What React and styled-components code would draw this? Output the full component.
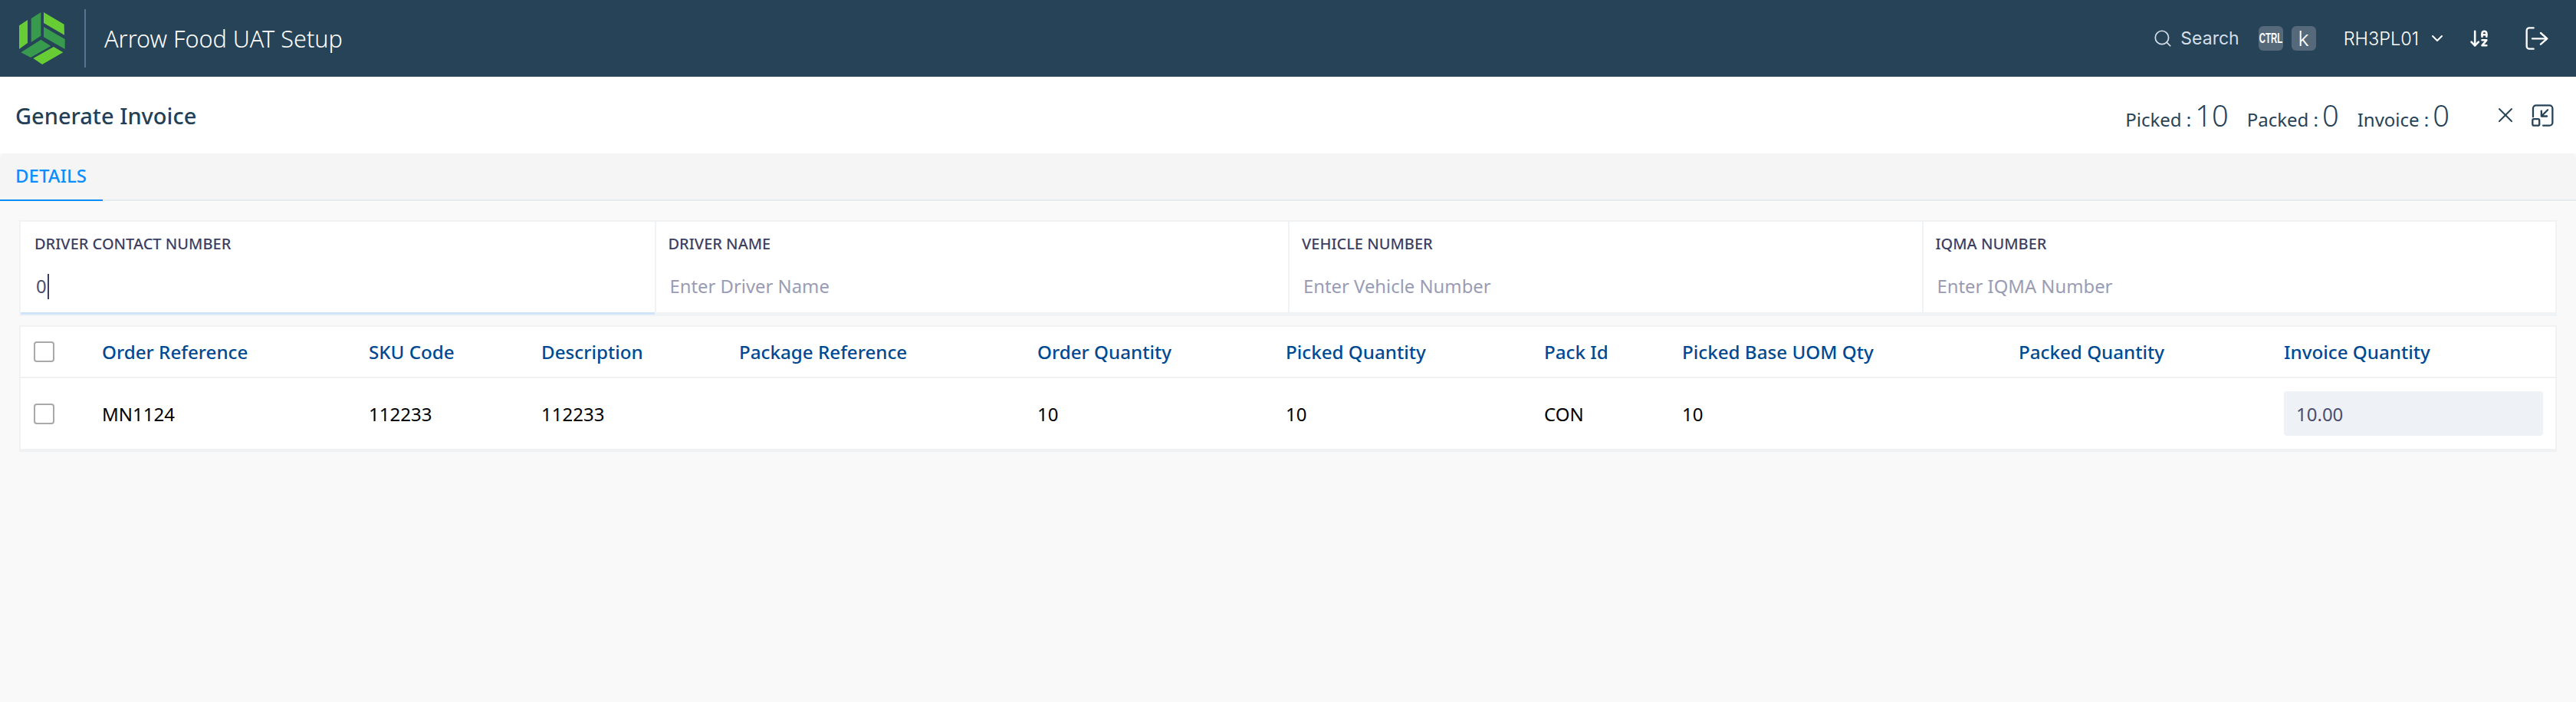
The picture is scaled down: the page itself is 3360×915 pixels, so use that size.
import React from 'react'
import styled, { createGlobalStyle } from 'styled-components'
import { ArrowDownAZ, ChevronDown, Search, X } from 'lucide-react'

const GlobalStyle = createGlobalStyle`
  html, body {
    margin: 0;
    padding: 0;
    height: 100%;
    background: #f9f9fa;
    font-family: "Noto Sans", "Open Sans", sans-serif;
  }
  * { box-sizing: border-box; }
`

const Page = styled.div`
  width: 3360px;
  height: 915px;
  overflow: hidden;
  background: #f9f9fa;
`

const TopBar = styled.header`
  display: flex;
  align-items: center;
  height: 100px;
  background: #264358;
  color: #fff;
`

const LogoMark = styled.svg`
  width: 60px;
  height: 68px;
  margin-left: 25px;
`

const BarDivider = styled.div`
  width: 2px;
  height: 76px;
  margin: 0 24px 0 25px;
  background: #557590;
`

const AppTitle = styled.div`
  flex: 1;
  font-size: 30.6px;
  font-weight: 300;
`

const SearchBox = styled.div`
  display: flex;
  align-items: center;
  gap: 10px;
  font-family: "Inter", sans-serif;
  font-size: 23px;
  color: #d5dfe7;
`

const KeyGroup = styled.div`
  display: flex;
  gap: 11px;
  margin-left: 25px;
`

const Key = styled.div`
  display: flex;
  align-items: center;
  justify-content: center;
  width: 32px;
  height: 32px;
  border-radius: 6px;
  background: #55697b;
  color: #fff;
`

const CtrlLabel = styled.span`
  font-family: "Liberation Sans", sans-serif;
  font-size: 12px;
  font-weight: 700;
  transform: scale(0.95, 1.55);
`

const KLabel = styled.span`
  font-family: "Inter", sans-serif;
  font-size: 27px;
  font-weight: 300;
  line-height: 1;
`

const UserMenu = styled.div`
  display: flex;
  align-items: center;
  gap: 12px;
  margin-left: 36px;
  font-family: "Inter", sans-serif;
  font-size: 23.5px;
  font-weight: 300;
  color: #fff;
`

const BarIcons = styled.div`
  display: flex;
  align-items: center;
  gap: 46px;
  margin: 0 36px 0 29px;
`

const TitleRow = styled.div`
  display: flex;
  align-items: center;
  justify-content: space-between;
  height: 100px;
  padding: 0 29px 0 20px;
  background: #fff;
  color: #264358;
`

const PageTitle = styled.h1`
  margin: 0;
  font-size: 29px;
  font-weight: 500;
  color: #253f55;
`

const TitleRight = styled.div`
  display: flex;
  align-items: center;
`

const Stat = styled.div`
  display: flex;
  align-items: baseline;
  gap: 5px;
  margin-right: 24px;
  font-size: 24px;
`

const StatValue = styled.span`
  font-size: 38px;
  font-weight: 300;
`

const CloseWrap = styled.div`
  display: flex;
  margin: 0 18px 0 33px;
`

const TabBar = styled.div`
  height: 62px;
  border-radius: 6px 6px 0 0;
  border-bottom: 2px solid #e4ecf0;
  background: #f5f5f5;
`

const Tab = styled.div`
  display: flex;
  align-items: center;
  width: 134px;
  height: 62px;
  padding: 0 0 3px 20px;
  border-bottom: 2px solid #0a8dff;
  color: #0a8dff;
  font-size: 24px;
  font-weight: 500;
`

const Content = styled.main`
  display: flex;
  flex-direction: column;
  gap: 12px;
  padding: 25px 25px 0;
`

const FormPanel = styled.section`
  display: grid;
  grid-template-columns: repeat(4, 1fr);
  height: 125px;
  border: 2px solid #f0f3f6;
  background: #fff;
`

const Field = styled.div`
  display: flex;
  flex-direction: column;
  padding: 16px 20px 0 ${(p) => (p.$first ? 18 : 16)}px;
  border-left: ${(p) => (p.$first ? 'none' : '2px solid #f0f3f6')};
  border-bottom: 3px solid ${(p) => (p.$active ? '#cfe4fb' : '#f0f3f6')};
`

const FieldLabel = styled.label`
  font-size: 20px;
  font-weight: 500;
  line-height: 26px;
  color: #3c3f63;
`

const FieldInput = styled.div`
  display: flex;
  align-items: center;
  height: 36px;
  margin-top: 24px;
  padding-left: 2px;
  font-size: 23.85px;
  color: ${(p) => (p.$placeholder ? '#9a9cb5' : '#4a4d70')};
`

const Caret = styled.span`
  width: 2px;
  height: 33px;
  margin-left: 1px;
  background: #3c3f63;
`

const TablePanel = styled.section`
  border: 2px solid #f0f1f3;
  border-bottom-width: 4px;
  background: #fff;
`

const Row = styled.div`
  display: grid;
  grid-template-columns: 106px 348px 225px 258px 389px 324px 337px 180px 439px 346px 1fr;
  align-items: center;
  height: ${(p) => p.$height}px;
  border-bottom: ${(p) => (p.$head ? '2px solid #f0f1f3' : 'none')};
  font-size: ${(p) => (p.$head ? 24.2 : 24)}px;
  color: ${(p) => (p.$head ? '#004a93' : '#000')};
  font-weight: ${(p) => (p.$head ? 500 : 400)};
`

const CheckCell = styled.div`
  display: flex;
  padding-left: 17px;
`

const Checkbox = styled.span`
  display: block;
  width: 27px;
  height: 27px;
  border: 2px solid #a9a9a9;
  border-radius: 4px;
  background: #fff;
`

const QuantityInput = styled.div`
  display: flex;
  align-items: center;
  height: 58px;
  margin-right: 16px;
  padding-left: 16px;
  border-radius: 4px;
  background: #eef1f5;
  color: #4a4d70;
`

const LogoutIcon = () => (
  <svg width="30" height="30" viewBox="280 44 90 90" fill="none" stroke="#fff" strokeWidth="7" strokeLinecap="round" strokeLinejoin="round">
    <path d="M312 48h-17a10 10 0 0 0-10 10v62a10 10 0 0 0 10 10h17" />
    <path d="M307 90h58M340 68l25 22-25 22" />
  </svg>
)

const CollapseIcon = () => (
  <svg width="29" height="29" viewBox="304 346 88 88" fill="none" stroke="#264358" strokeWidth="7" strokeLinecap="round" strokeLinejoin="round">
    <path d="M310 395v-33a12 12 0 0 1 12-12h53a12 12 0 0 1 12 12v56a12 12 0 0 1-12 12h-25" />
    <rect x="308" y="404" width="27" height="26" rx="5" />
    <path d="M368 368l-25 25M343 372v21h22" />
  </svg>
)

const fields = [
  { label: 'DRIVER CONTACT NUMBER', value: '0' },
  { label: 'DRIVER NAME', placeholder: 'Enter Driver Name' },
  { label: 'VEHICLE NUMBER', placeholder: 'Enter Vehicle Number' },
  { label: 'IQMA NUMBER', placeholder: 'Enter IQMA Number' },
]

const columns = [
  'Order Reference',
  'SKU Code',
  'Description',
  'Package Reference',
  'Order Quantity',
  'Picked Quantity',
  'Pack Id',
  'Picked Base UOM Qty',
  'Packed Quantity',
  'Invoice Quantity',
]

const rowValues = ['MN1124', '112233', '112233', '', '10', '10', 'CON', '10', '']

const stats = [
  { label: 'Picked :', value: 10 },
  { label: 'Packed :', value: 0 },
  { label: 'Invoice :', value: 0 },
]

export default function App() {
  return (
    <Page>
      <GlobalStyle />
      <TopBar>
        <LogoMark viewBox="75 48 180 204">
          <polygon fill="#68cc35" points="75,100 108,78 108,168 75,192" />
          <polygon fill="#379a4c" points="122,72 160,48 160,140 122,165" />
          <polygon fill="#68cc35" points="171,48 251,95 252,137 171,90" />
          <polygon fill="#379a4c" points="171,105 254,153 254,192 171,145" />
          <polygon fill="#379a4c" points="160,155 199,180 120,225 82,205" />
          <polygon fill="#68cc35" points="210,183 247,205 165,252 130,228" />
        </LogoMark>
        <BarDivider />
        <AppTitle>Arrow Food UAT Setup</AppTitle>
        <SearchBox>
          <Search size={26} strokeWidth={1.6} />
          Search
        </SearchBox>
        <KeyGroup>
          <Key>
            <CtrlLabel>CTRL</CtrlLabel>
          </Key>
          <Key>
            <KLabel>k</KLabel>
          </Key>
        </KeyGroup>
        <UserMenu>
          RH3PL01
          <ChevronDown size={24} strokeWidth={2} />
        </UserMenu>
        <BarIcons>
          <ArrowDownAZ size={28} strokeWidth={2.2} />
          <LogoutIcon />
        </BarIcons>
      </TopBar>
      <TitleRow>
        <PageTitle>Generate Invoice</PageTitle>
        <TitleRight>
          {stats.map((s) => (
            <Stat key={s.label}>
              {s.label}
              <StatValue>{s.value}</StatValue>
            </Stat>
          ))}
          <CloseWrap>
            <X size={32} strokeWidth={1.5} />
          </CloseWrap>
          <CollapseIcon />
        </TitleRight>
      </TitleRow>
      <TabBar>
        <Tab>DETAILS</Tab>
      </TabBar>
      <Content>
        <FormPanel>
          {fields.map((f, i) => (
            <Field key={f.label} $first={i === 0} $active={i === 0}>
              <FieldLabel>{f.label}</FieldLabel>
              <FieldInput $placeholder={!f.value}>
                {f.value || f.placeholder}
                {f.value && <Caret />}
              </FieldInput>
            </Field>
          ))}
        </FormPanel>
        <TablePanel>
          <Row $head $height={67}>
            <CheckCell>
              <Checkbox />
            </CheckCell>
            {columns.map((c) => (
              <div key={c}>{c}</div>
            ))}
          </Row>
          <Row $height={92}>
            <CheckCell>
              <Checkbox />
            </CheckCell>
            {rowValues.map((v, i) => (
              <div key={i}>{v}</div>
            ))}
            <QuantityInput>10.00</QuantityInput>
          </Row>
        </TablePanel>
      </Content>
    </Page>
  )
}
